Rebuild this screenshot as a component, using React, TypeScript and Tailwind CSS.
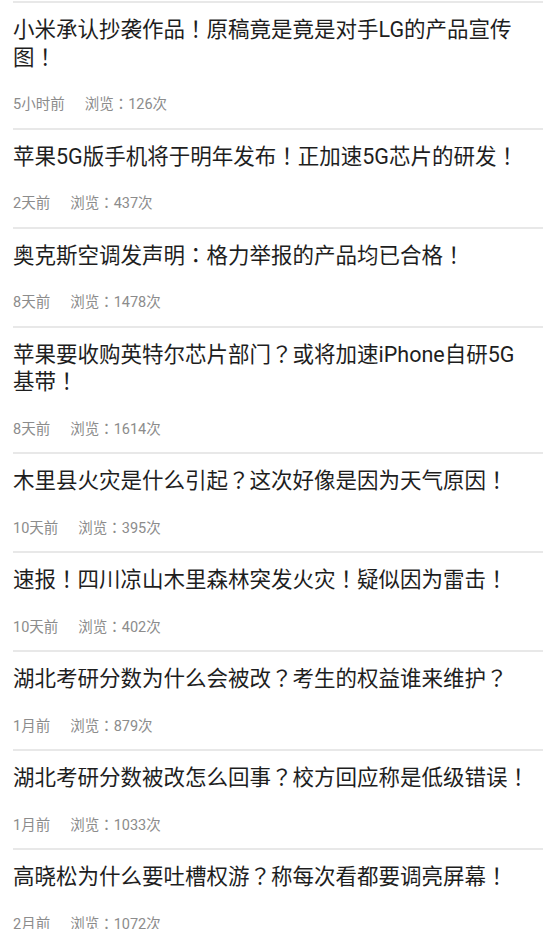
const news = [
  { title: '小米承认抄袭作品！原稿竟是竟是对手LG的产品宣传图！', time: '5小时前', views: 126 },
  { title: '苹果5G版手机将于明年发布！正加速5G芯片的研发！', time: '2天前', views: 437 },
  { title: '奥克斯空调发声明：格力举报的产品均已合格！', time: '8天前', views: 1478 },
  { title: '苹果要收购英特尔芯片部门？或将加速iPhone自研5G基带！', time: '8天前', views: 1614 },
  { title: '木里县火灾是什么引起？这次好像是因为天气原因！', time: '10天前', views: 395 },
  { title: '速报！四川凉山木里森林突发火灾！疑似因为雷击！', time: '10天前', views: 402 },
  { title: '湖北考研分数为什么会被改？考生的权益谁来维护？', time: '1月前', views: 879 },
  { title: '湖北考研分数被改怎么回事？校方回应称是低级错误！', time: '1月前', views: 1033 },
  { title: '高晓松为什么要吐槽权游？称每次看都要调亮屏幕！', time: '2月前', views: 1072 },
];

// full-width punctuation sits centred in its cell on the device, like the TC face draws it
function Text({ value }: { value: string }) {
  return (
    <>
      {value.split(/([！？：])/).map((part, i) =>
        /^[！？：]$/.test(part) ? (
          <span key={i} className="font-['Noto_Sans_CJK_TC',sans-serif] leading-[0]">
            {part}
          </span>
        ) : (
          part
        )
      )}
    </>
  );
}

export default function App() {
  return (
    <div className="min-h-screen bg-white px-[13px] pt-[1px] font-['Roboto','Noto_Sans_CJK_SC',sans-serif]">
      {news.map((item) => (
        <div key={item.title} className="border-t-2 border-[#e8e8e8] pt-[13px] pb-[12.5px]">
          <h2 className="pr-[10px] text-[21.5px] leading-[27.5px] font-normal text-[#1e1e1e]">
            <Text value={item.title} />
          </h2>
          <div className="mt-[24px] flex items-baseline gap-[20px] text-[14.5px] leading-[20px] text-[#8c8c8c]">
            <span>{item.time}</span>
            <span>
              <Text value={`浏览：${item.views}次`} />
            </span>
          </div>
        </div>
      ))}
    </div>
  );
}
